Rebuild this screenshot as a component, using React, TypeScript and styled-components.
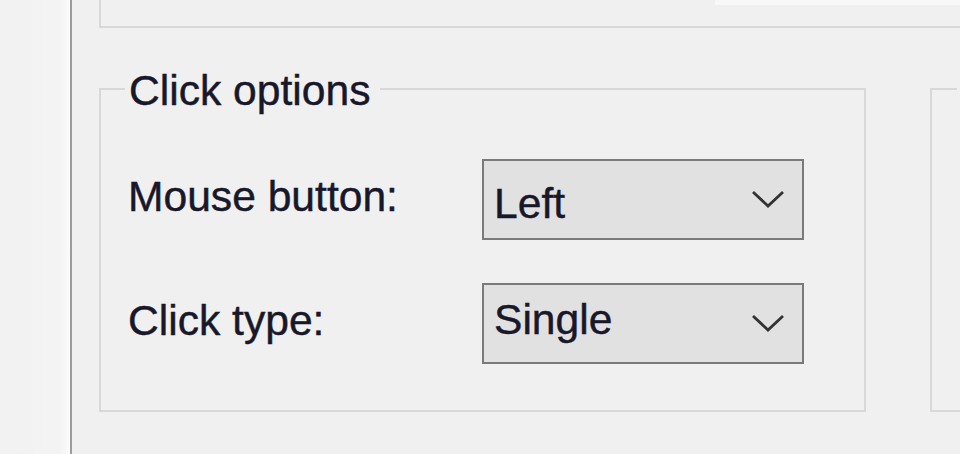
import React from 'react';
import styled, { createGlobalStyle } from 'styled-components';

const GlobalStyle = createGlobalStyle`
  html, body {
    margin: 0;
    padding: 0;
    background: #f0f0f0;
  }
  body {
    font-family: "Liberation Sans", Arial, sans-serif;
  }
`;

const Window = styled.div`
  display: flex;
  width: 960px;
  height: 454px;
  overflow: hidden;
  background: #f0f0f0;
`;

const Sidebar = styled.div`
  flex: 0 0 70px;
  background: linear-gradient(to right, #f2f2f2 0%, #f3f3f3 84%, #fbfbfb 100%);
  border-right: 2px solid #9c9c9c;
`;

const Content = styled.div`
  flex: 1;
  min-width: 0;
  padding-left: 27px;
  display: flex;
  flex-direction: column;
  overflow: hidden;
`;

const TopGroup = styled.div`
  flex: 0 0 28px;
  box-sizing: border-box;
  width: 920px;
  border-left: 2px solid #d8d8d8;
  border-bottom: 2px solid #d8d8d8;
  display: flex;
  align-items: flex-start;
  padding-left: 614px;
`;

const TextField = styled.div`
  width: 300px;
  height: 5px;
  background: #f8f8f8;
`;

const GroupRow = styled.div`
  display: flex;
  gap: 64px;
  margin-top: 36px;
`;

const GroupBox = styled.fieldset<{ $width: number }>`
  flex: 0 0 auto;
  box-sizing: border-box;
  width: ${p => p.$width}px;
  min-width: 0;
  margin: 0;
  padding: 45px 0 46px 0;
  border: 2px solid #d8d8d8;
`;

const Text = `
  font-size: 42.6px;
  line-height: 48px;
  color: #18182a;
  -webkit-text-stroke: 0.45px #18182a;
  white-space: nowrap;
`;

const Legend = styled.legend<{ $offset: number; $width?: number }>`
  margin-left: ${p => p.$offset}px;
  padding: 2px 10px 0 4px;
  ${Text}
  ${p => (p.$width ? `width: ${p.$width}px; height: 48px;` : '')}
`;

const Fields = styled.div`
  display: grid;
  grid-template-columns: 354px 322px;
  grid-auto-rows: 81px;
  row-gap: 43px;
  padding-left: 27px;
`;

const Label = styled.span`
  padding-top: 13px;
  ${Text}
`;

const Combo = styled.div`
  box-sizing: border-box;
  height: 81px;
  border: 2px solid #7a7a7a;
  background: #e1e1e1;
  display: flex;
  align-items: center;
  padding: 0 17px 0 10px;
`;

const ComboValue = styled.span<{ $top: number }>`
  flex: 1;
  align-self: flex-start;
  padding-top: ${p => p.$top}px;
  ${Text}
`;

const Chevron = () => (
  <svg width="34" height="19" viewBox="0 0 34 19">
    <polyline points="2,2 17,16 32,2" fill="none" stroke="#333" strokeWidth="2.8" />
  </svg>
);

const options = [
  { label: 'Mouse button:', value: 'Left', top: 18 },
  { label: 'Click type:', value: 'Single', top: 10 },
];

const App: React.FC = () => {
  return (
    <>
      <GlobalStyle />
      <Window>
        <Sidebar />
        <Content>
          <TopGroup>
            <TextField />
          </TopGroup>
          <GroupRow>
            <GroupBox $width={767}>
              <Legend $offset={24}>Click options</Legend>
              <Fields>
                {options.map(opt => (
                  <React.Fragment key={opt.label}>
                    <Label>{opt.label}</Label>
                    <Combo>
                      <ComboValue $top={opt.top}>{opt.value}</ComboValue>
                      <Chevron />
                    </Combo>
                  </React.Fragment>
                ))}
              </Fields>
            </GroupBox>
            <GroupBox $width={400}>
              <Legend $offset={25} $width={200} />
            </GroupBox>
          </GroupRow>
        </Content>
      </Window>
    </>
  );
};

export default App;
